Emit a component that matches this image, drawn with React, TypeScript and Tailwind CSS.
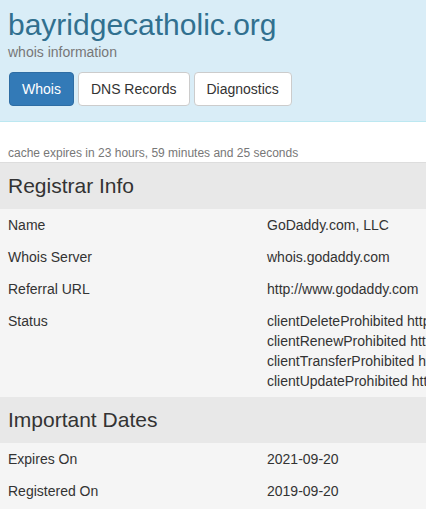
const rows1 = [
  { label: 'Name', value: ['GoDaddy.com, LLC'] },
  { label: 'Whois Server', value: ['whois.godaddy.com'] },
  { label: 'Referral URL', value: ['http://www.godaddy.com'] },
  {
    label: 'Status',
    value: [
      'clientDeleteProhibited https://icann.org/epp#clientDeleteProhibited',
      'clientRenewProhibited https://icann.org/epp#clientRenewProhibited',
      'clientTransferProhibited https://icann.org/epp#clientTransferProhibited',
      'clientUpdateProhibited https://icann.org/epp#clientUpdateProhibited',
    ],
  },
]

const rows2 = [
  { label: 'Expires On', value: ['2021-09-20'] },
  { label: 'Registered On', value: ['2019-09-20'] },
]

function SectionHead({ title }: { title: string }) {
  return (
    <div className="bg-[#e8e8e8] px-[8px] pt-[11px] pb-[12px] text-[21px] leading-[23px] text-[#333]">
      {title}
    </div>
  )
}

function Row({ label, value }: { label: string; value: string[] }) {
  return (
    <div className="flex px-[8px] py-[6px] text-[14px] leading-[20px] text-[#333]">
      <div className="w-[259px] shrink-0">{label}</div>
      <div className="whitespace-nowrap">
        {value.map(v => (
          <div key={v}>{v}</div>
        ))}
      </div>
    </div>
  )
}

export default function App() {
  return (
    <div className="w-[426px] h-[509px] overflow-hidden bg-white font-['Liberation_Sans',Arial,sans-serif]">
      <div className="bg-[#d9edf7] border-b border-[#bce8f1] px-[8px] pt-[8px] pb-[15px]">
        <h1 className="text-[30px] leading-[33px] text-[#31708f]">bayridgecatholic.org</h1>
        <p className="mt-[1px] text-[14px] leading-[20px] text-[#777]">whois information</p>
        <div className="mt-[10px] ml-[1px] flex gap-[4px]">
          <button className="h-[34px] px-[12px] rounded-[4px] border border-[#2e6da4] bg-[#337ab7] text-white text-[14px]">
            Whois
          </button>
          <button className="h-[34px] px-[12px] rounded-[4px] border border-[#ccc] bg-white text-[#333] text-[14px]">
            DNS Records
          </button>
          <button className="h-[34px] px-[12px] rounded-[4px] border border-[#ccc] bg-white text-[#333] text-[14px]">
            Diagnostics
          </button>
        </div>
      </div>

      <p className="px-[8px] pt-[23px] text-[12px] leading-[17px] text-[#777] border-b border-[#ddd]">
        cache expires in 23 hours, 59 minutes and 25 seconds
      </p>

      <div className="bg-[#f5f5f5]">
        <SectionHead title="Registrar Info" />
        {rows1.map(r => (
          <Row key={r.label} label={r.label} value={r.value} />
        ))}
        <SectionHead title="Important Dates" />
        {rows2.map(r => (
          <Row key={r.label} label={r.label} value={r.value} />
        ))}
        <div className="h-[20px]" />
      </div>
    </div>
  )
}
